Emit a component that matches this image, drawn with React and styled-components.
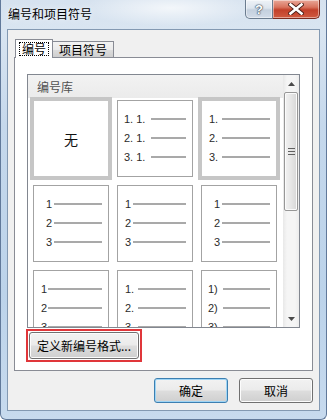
import React from 'react';
import styled, { createGlobalStyle } from 'styled-components';

const GlobalStyle = createGlobalStyle`
  html, body {
    margin: 0;
    padding: 0;
    background: #ffffff;
  }
  body {
    font-family: "Noto Sans CJK SC", "Liberation Sans", sans-serif;
    font-size: 12px;
    color: #000;
  }
`;

const Window = styled.div`
  width: 327px;
  height: 420px;
  box-sizing: border-box;
  display: flex;
  flex-direction: column;
  border: 1px solid #61799a;
  border-top: none;
  border-radius: 0 0 6px 6px;
  background:
    radial-gradient(ellipse 90px 18px at 170px 8px, rgba(255,255,255,0.7), rgba(255,255,255,0)),
    linear-gradient(180deg, #d6e2ef 0%, #d9e5f1 7%, #c5d8ec 30%, #bcd3ea 70%, #c7daee 100%);
`;

const TitleBar = styled.div`
  height: 29px;
  display: flex;
  align-items: flex-start;
`;

const Title = styled.div`
  padding: 6px 0 0 7px;
  font-size: 12px;
  line-height: 16px;
  color: #000;
  text-shadow: 0 0 6px rgba(255,255,255,0.9);
`;

const CaptionButtons = styled.div`
  margin-left: auto;
  margin-right: 6px;
  display: flex;
`;

const CaptionButton = styled.div`
  height: 19px;
  width: ${p => p.$w}px;
  box-sizing: border-box;
  display: flex;
  align-items: center;
  justify-content: center;
  border: 1px solid ${p => (p.$close ? '#7a2b1f' : '#6b7c8f')};
  border-top: none;
  border-left: ${p => (p.$close ? 'none' : '1px solid #6b7c8f')};
  border-radius: ${p => (p.$close ? '0 0 5px 0' : '0 0 0 5px')};
  background: ${p =>
    p.$close
      ? 'linear-gradient(180deg, #e9a899 0%, #d9735e 40%, #c2402a 55%, #d05a40 100%)'
      : 'linear-gradient(180deg, #eef2f7 0%, #dde5ee 45%, #c4d0de 55%, #d2dce8 100%)'};
  box-shadow: inset 0 0 0 1px rgba(255,255,255,0.45);
`;

const HelpGlyph = styled.span`
  font-family: "Liberation Sans", sans-serif;
  font-weight: bold;
  font-size: 13px;
  line-height: 1;
  color: #fff;
  text-shadow: 0 0 1px #3a4a5c, 0 0 1px #3a4a5c, 0 0 2px #3a4a5c;
`;

const Client = styled.div`
  flex: 1;
  margin: 0 6px 8px 6px;
  border: 1px solid #8399b2;
  background: #f0f0f0;
  display: flex;
  flex-direction: column;
`;

const TabStrip = styled.div`
  display: flex;
  align-items: flex-end;
  padding: 9px 0 0 7px;
  height: 18px;
`;

const Tab = styled.div`
  position: relative;
  z-index: 1;
  box-sizing: border-box;
  display: flex;
  align-items: center;
  justify-content: center;
  border: 1px solid #898c95;
  border-bottom: none;
  height: ${p => (p.$active ? 19 : 16)}px;
  margin-bottom: ${p => (p.$active ? -1 : 0)}px;
  padding: 0 ${p => (p.$active ? 3 : 6)}px;
  border-left: ${p => (p.$active ? '1px solid #898c95' : 'none')};
  background: ${p =>
    p.$active ? '#ffffff' : 'linear-gradient(180deg, #f3f3f3 0%, #ebebeb 50%, #dddddd 51%, #cfcfcf 100%)'};
  font-size: 12px;
  line-height: 14px;
`;

const FocusText = styled.span`
  border: 1px dotted #000;
  padding: 0 2px;
  line-height: 12px;
`;

const Panel = styled.div`
  margin: 0 6px;
  height: 314px;
  box-sizing: border-box;
  border: 1px solid #898c95;
  background: #ffffff;
  padding: 16px 0 0 12px;
  display: flex;
  flex-direction: column;
`;

const ListBox = styled.div`
  width: 273px;
  height: 254px;
  box-sizing: border-box;
  border: 1px solid #828790;
  display: flex;
  background: #ffffff;
`;

const ListBody = styled.div`
  flex: 1;
  overflow: hidden;
  display: flex;
  flex-direction: column;
`;

const ListHeader = styled.div`
  height: 23px;
  flex: none;
  padding-left: 9px;
  line-height: 23px;
  font-size: 12px;
  color: #505050;
  background: linear-gradient(180deg, #f2f2f2, #ebebeb);
`;

const Grid = styled.div`
  display: grid;
  grid-template-columns: repeat(3, 76px);
  grid-auto-rows: 77px;
  column-gap: 8px;
  row-gap: 8px;
  padding: 2px 0 0 5px;
`;

const Cell = styled.div`
  box-sizing: border-box;
  border: 1px solid ${p => (p.$selected ? '#c6c6c6' : '#a3a3a3')};
  box-shadow: ${p => (p.$selected ? '0 0 0 3px #c6c6c6' : 'none')};
  background: #ffffff;
  padding-top: 8px;
  display: flex;
  flex-direction: column;
`;

const NoneCell = styled(Cell)`
  padding-top: 0;
  align-items: center;
  justify-content: center;
  font-size: 14px;
  color: #111;
`;

const Item = styled.div`
  height: 19px;
  display: flex;
  align-items: center;
  padding-left: ${p => p.$pad}px;
  padding-right: 6px;
`;

const Num = styled.span`
  width: ${p => p.$w}px;
  flex: none;
  font-family: "Liberation Sans", Arial, sans-serif;
  font-size: 11px;
  color: #2b2b2b;
  white-space: pre;
`;

const Rule = styled.span`
  flex: 1;
  height: 2px;
  background: #a9a9a9;
`;

const ScrollBar = styled.div`
  width: 16px;
  flex: none;
  display: flex;
  flex-direction: column;
  background: linear-gradient(90deg, #e8e8e8 0%, #f5f5f5 25%, #f5f5f5 75%, #ececec 100%);
`;

const ArrowBox = styled.div`
  height: 17px;
  flex: none;
  display: flex;
  align-items: center;
  justify-content: center;
`;

const Thumb = styled.div`
  height: 119px;
  margin: 0 1px;
  box-sizing: border-box;
  border: 1px solid #979797;
  border-radius: 2px;
  background: linear-gradient(90deg, #f2f2f2 0%, #e6e6e6 50%, #d7d7d7 100%);
  box-shadow: inset 0 0 0 1px #fbfbfb;
  display: flex;
  align-items: center;
  justify-content: center;
`;

const Track = styled.div`
  flex: 1;
`;

const Highlight = styled.div`
  align-self: flex-start;
  margin: 1px 0 0 -1px;
  border: 2px solid #e0363a;
  padding: 1px;
`;

const Button = styled.button`
  height: ${p => p.$h || 25}px;
  width: ${p => (p.$w ? `${p.$w}px` : 'auto')};
  box-sizing: border-box;
  padding: 0 7px;
  border: 1px solid ${p => (p.$default ? '#3c7fb1' : '#707070')};
  border-radius: 3px;
  background: linear-gradient(180deg, #f2f2f2 0%, #ebebeb 48%, #dddddd 52%, #cfcfcf 100%);
  box-shadow: inset 0 0 0 1px ${p => (p.$default ? '#9fd5f5' : '#fcfcfc')};
  font-family: "Noto Sans CJK SC", "Liberation Sans", sans-serif;
  font-size: 12px;
  color: #000;
  display: flex;
  align-items: center;
  justify-content: center;
`;

const Footer = styled.div`
  display: flex;
  justify-content: flex-end;
  gap: 11px;
  padding: 7px 6px 0 0;
`;

const rows = [
  [
    { none: true, selected: true },
    { labels: ['1. 1.', '2. 1.', '3. 1.'], pad: 6, at: 33 },
    { labels: ['1.', '2.', '3.'], pad: 7, at: 20, selected: true },
  ],
  [
    { labels: ['  1', '  2', '  3'], pad: 6, at: 20 },
    { labels: ['1', '2', '3'], pad: 7, at: 15 },
    { labels: ['  1', '  2', '  3'], pad: 6, at: 20 },
  ],
  [
    { labels: ['1', '2', '3'], pad: 7, at: 14 },
    { labels: ['1.', '2.', '3.'], pad: 7, at: 20 },
    { labels: ['1)', '2)', '3)'], pad: 6, at: 21 },
  ],
];

function Arrow({ up }) {
  return (
    <svg width="7" height="4" viewBox="0 0 7 4">
      <path d={up ? 'M0 4 L3.5 0 L7 4 Z' : 'M0 0 L3.5 4 L7 0 Z'} fill="#4a4a4a" />
    </svg>
  );
}

function Grip() {
  return (
    <svg width="7" height="7" viewBox="0 0 7 7">
      <path d="M0 0.5 H7 M0 3.5 H7 M0 6.5 H7" stroke="#606060" strokeWidth="1" />
    </svg>
  );
}

function CloseX() {
  return (
    <svg width="16" height="12" viewBox="0 0 16 12">
      <path d="M2.5 1.5 L13.5 10.5 M13.5 1.5 L2.5 10.5" stroke="#4a1d16" strokeWidth="4.4" strokeLinecap="square" />
      <path d="M2.5 1.5 L13.5 10.5 M13.5 1.5 L2.5 10.5" stroke="#ffffff" strokeWidth="2.6" strokeLinecap="square" />
    </svg>
  );
}

function Style({ cell }) {
  if (cell.none) {
    return <NoneCell $selected={cell.selected}>无</NoneCell>;
  }
  return (
    <Cell $selected={cell.selected}>
      {cell.labels.map(l => (
        <Item key={l} $pad={cell.pad}>
          <Num $w={cell.at - cell.pad}>{l}</Num>
          <Rule />
        </Item>
      ))}
    </Cell>
  );
}

export default function App() {
  return (
    <>
      <GlobalStyle />
      <Window>
        <TitleBar>
          <Title>编号和项目符号</Title>
          <CaptionButtons>
            <CaptionButton $w={28}>
              <HelpGlyph>?</HelpGlyph>
            </CaptionButton>
            <CaptionButton $w={47} $close>
              <CloseX />
            </CaptionButton>
          </CaptionButtons>
        </TitleBar>
        <Client>
          <TabStrip>
            <Tab $active>
              <FocusText>编号</FocusText>
            </Tab>
            <Tab>项目符号</Tab>
          </TabStrip>
          <Panel>
            <ListBox>
              <ListBody>
                <ListHeader>编号库</ListHeader>
                <Grid>
                  {rows.flat().map((cell, i) => (
                    <Style key={i} cell={cell} />
                  ))}
                </Grid>
              </ListBody>
              <ScrollBar>
                <ArrowBox>
                  <Arrow up />
                </ArrowBox>
                <Thumb>
                  <Grip />
                </Thumb>
                <Track />
                <ArrowBox>
                  <Arrow />
                </ArrowBox>
              </ScrollBar>
            </ListBox>
            <Highlight>
              <Button $h={27}>定义新编号格式...</Button>
            </Highlight>
          </Panel>
          <Footer>
            <Button $w={74} $default>确定</Button>
            <Button $w={74}>取消</Button>
          </Footer>
        </Client>
      </Window>
    </>
  );
}
